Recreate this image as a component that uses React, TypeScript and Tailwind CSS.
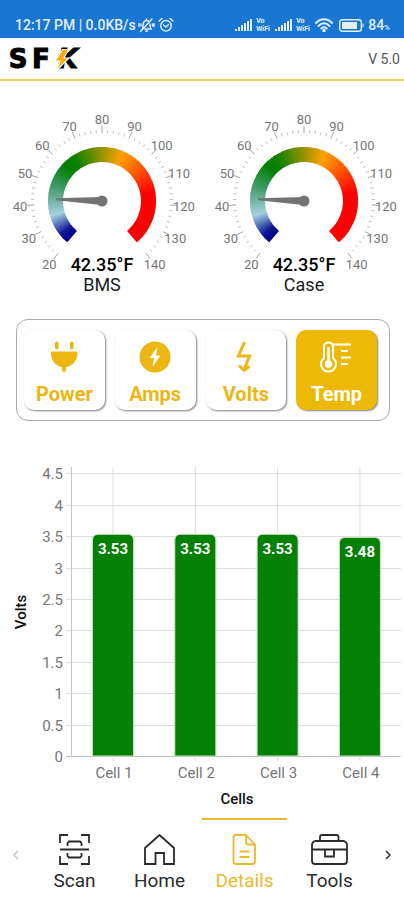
import React, { useState } from "react";

const SIGNAL_HEIGHTS = [2, 4, 6, 8, 10, 12];
const GAUGE_STOPS: [number, number[]][] = [
  [20, [0, 0, 139]],
  [24, [14, 22, 150]],
  [34, [165, 208, 222]],
  [48, [65, 155, 105]],
  [60, [0, 128, 0]],
  [66, [18, 130, 0]],
  [90, [255, 160, 0]],
  [114, [255, 0, 0]],
  [140, [255, 0, 0]],
];

const colorAt = (v: number) => {
  for (let i = 1; i < GAUGE_STOPS.length; i++) {
    const [a, ca] = GAUGE_STOPS[i - 1];
    const [b, cb] = GAUGE_STOPS[i];
    if (v <= b) {
      const t = (v - a) / (b - a);
      return `rgb(${ca.map((c, k) => Math.round(c + (cb[k] - c) * t)).join(",")})`;
    }
  }
  return "rgb(255,0,0)";
};

const CX = 102;
const CY = 101;
const angleOf = (v: number) => (((v - 80) / 60) * 140 * Math.PI) / 180;
const polar = (angle: number, r: number) => [CX + r * Math.sin(angle), CY - r * Math.cos(angle)];

function Gauge({ value, name }: { value: number; name: string }) {
  const slices = [];
  for (let v = 20; v < 140; v += 1) {
    const a = angleOf(v);
    const b = angleOf(Math.min(140, v + 1.4));
    const [x1, y1] = polar(a, 54);
    const [x2, y2] = polar(b, 54);
    const [x3, y3] = polar(b, 39);
    const [x4, y4] = polar(a, 39);
    slices.push(
      <path key={v} d={`M${x1} ${y1}A54 54 0 0 1 ${x2} ${y2}L${x3} ${y3}A39 39 0 0 0 ${x4} ${y4}Z`} fill={colorAt(v)} />,
    );
  }
  const ticks = [];
  for (let v = 20; v <= 140; v += 2) {
    const major = v % 10 === 0;
    const [x1, y1] = polar(angleOf(v), 68);
    const [x2, y2] = polar(angleOf(v), major ? 75 : 71);
    ticks.push(<line key={v} x1={x1} y1={y1} x2={x2} y2={y2} stroke={major ? "#a3a3a3" : "#c0c0c0"} strokeWidth="1" />);
  }
  const labels = [];
  for (let v = 20; v <= 140; v += 10) {
    const [x, y] = polar(angleOf(v), 82);
    labels.push(
      <text key={v} x={x} y={y + 5} textAnchor="middle" fontSize="13" fill="#767676">
        {v}
      </text>,
    );
  }
  const rotation = (angleOf(value) * 180) / Math.PI;
  return (
    <svg viewBox="0 0 202 200" className="w-full" role="img" aria-label={`${name} temperature`}>
      {slices}
      {ticks}
      {labels}
      <g transform={`rotate(${rotation} ${CX} ${CY})`}>
        <path d={`M${CX - 4} ${CY}L${CX - 1} ${CY - 46}L${CX + 1} ${CY - 46}L${CX + 4} ${CY}Z`} fill="#737373" />
      </g>
      <circle cx={CX} cy={CY} r="5.5" fill="#737373" />
      <text x={CX} y="171" textAnchor="middle" fontSize="18" fontWeight="500" fill="#000000">
        {value}°F
      </text>
      <text x={CX} y="191" textAnchor="middle" fontSize="18" fill="#1c1c1c">
        {name}
      </text>
    </svg>
  );
}

const CELLS = [
  { name: "Cell 1", volts: 3.53 },
  { name: "Cell 2", volts: 3.53 },
  { name: "Cell 3", volts: 3.53 },
  { name: "Cell 4", volts: 3.48 },
];

function CellChart() {
  const base = 302;
  const unit = 62.8;
  const yTicks = [0, 0.5, 1, 1.5, 2, 2.5, 3, 3.5, 4, 4.5];
  return (
    <svg viewBox="0 0 404 363" className="w-full" role="img" aria-label="Cell voltages">
      {yTicks.map((v) => {
        const y = Math.round(base - v * unit) + 0.5;
        return (
          <g key={v}>
            <line x1="66" x2="401" y1={y} y2={y} stroke={v === 0 ? "#bdbdbd" : "#dddddd"} />
            <text x="63" y={y + 5} textAnchor="end" fontSize="15" fill="#767676">
              {v}
            </text>
          </g>
        );
      })}
      <line x1="71.5" x2="71.5" y1="13" y2="303" stroke="#c4c4c4" />
      {CELLS.map((cell, i) => {
        const x = 113 + i * 82.3;
        const top = base - cell.volts * unit;
        return (
          <g key={cell.name}>
            <line x1={x} x2={x} y1="13" y2="307" stroke="#dddddd" />
            <path
              d={`M${x - 20.5} ${base}V${top + 6}q0 -6 6 -6h29q6 0 6 6V${base}Z`}
              fill="#048004"
              stroke="#c9dfc9"
              strokeWidth="1"
            />
            <text x={x} y={top + 20} textAnchor="middle" fontSize="15" fontWeight="700" fill="#ffffff">
              {cell.volts}
            </text>
            <text x={x + 1} y="324" textAnchor="middle" fontSize="15" fill="#767676">
              {cell.name}
            </text>
          </g>
        );
      })}
      <text x="237" y="350" textAnchor="middle" fontSize="15" fontWeight="500" fill="#111111">
        Cells
      </text>
      <text transform="translate(26 158) rotate(-90)" textAnchor="middle" fontSize="15" fontWeight="500" fill="#111111">
        Volts
      </text>
    </svg>
  );
}

function SignalBars() {
  return (
    <svg width="18" height="12" viewBox="0 0 18 12" fill="#e3effb" aria-hidden="true">
      {SIGNAL_HEIGHTS.map((h, i) => (
        <rect key={h} x={i * 3} y={12 - h} width="2" height={h} />
      ))}
    </svg>
  );
}

function VoWifi() {
  return (
    <span className="flex w-4 flex-col text-[7px] leading-[8px] font-bold">
      <span>Vo</span>
      <span>WiFi</span>
    </span>
  );
}

function StatusBar() {
  return (
    <div className="flex h-[38px] items-end justify-between bg-[#1976d2] pr-[14px] pb-[3px] pl-[15px] text-[#e3effb]">
      <div className="flex items-center">
        <span className="text-sm leading-5 font-medium">12:17 PM | 0.0KB/s</span>
        <svg className="ml-[2px]" width="17" height="16" viewBox="0 0 17 16" fill="none" stroke="currentColor" strokeWidth="1.4" strokeLinecap="round" aria-hidden="true">
          <path d="M4.5 11.5C5.5 10 5 8 5.3 6.5C5.8 4.5 7 3.5 8.5 3.5C9.5 3.5 10.5 4 11 4.7M12 7C12.2 9 12 10.5 13 12H7M7.5 14H9.5M2.5 14.5L14 2M1 6.5V9.5M3 7V9M14.5 7V9M16 6.5V9.5M8.5 2V3" />
        </svg>
        <svg className="ml-[3px]" width="16" height="16" viewBox="0 0 16 16" fill="none" stroke="currentColor" strokeWidth="1.4" strokeLinecap="round" aria-hidden="true">
          <circle cx="8" cy="8.8" r="5.3" />
          <path d="M1 4L4 1.5M15 4L12 1.5M5.5 8L8 10L10.5 7.5" />
        </svg>
      </div>
      <div className="flex items-center gap-[3px]">
        <SignalBars />
        <VoWifi />
        <SignalBars />
        <VoWifi />
        <svg width="18" height="14" viewBox="0 0 18 14" fill="none" stroke="currentColor" strokeWidth="1.9" strokeLinecap="round" aria-hidden="true">
          <path d="M1 5C5.5 0 12.5 0 17 5M3.5 8C7 4.5 11 4.5 14.5 8M6.3 10.5C8 9 10 9 11.7 10.5" />
          <circle cx="9" cy="12.5" r="0.8" />
        </svg>
        <svg className="ml-[3px]" width="26" height="13" viewBox="0 0 26 13" aria-hidden="true">
          <rect x="0.7" y="0.7" width="21.6" height="11.6" rx="2.5" fill="none" stroke="#e3effb" strokeWidth="1.4" />
          <rect x="3" y="3" width="15" height="7" fill="#e3effb" />
          <path d="M23.5 4Q26 6.5 23.5 9Z" fill="#e3effb" />
        </svg>
        <span className="flex items-baseline text-sm leading-5 font-medium">
          84<span className="text-[8px] leading-3">%</span>
        </span>
      </div>
    </div>
  );
}

function Logo() {
  return (
    <div
      className="flex items-center font-['DejaVu_Sans',sans-serif] text-[26px] leading-7 font-bold text-black [-webkit-text-stroke:1px_black]"
      aria-label="SFK"
    >
      <span className="w-6 text-center">S</span>
      <span className="w-[22px] text-center">F</span>
      <span className="relative w-[26px] text-right italic">
        K
        <svg className="absolute top-1 left-[2px]" width="17" height="22" viewBox="0 0 17 22" aria-hidden="true">
          <path d="M9 0L1 12H6L3 21L15 9H10L15 0Z" fill="#f6a80c" stroke="#ffffff" strokeWidth="1.2" />
        </svg>
      </span>
    </div>
  );
}

const METRICS = [
  {
    name: "Power",
    icon: (
      <>
        <rect x="7" y="0.5" width="3.6" height="8" rx="1.8" />
        <rect x="22" y="0.5" width="3.6" height="8" rx="1.8" />
        <path d="M3 10.5H29.5V14C28.5 21 23 25.5 18 26V29.5L16 31.5L14 29.5V26C9 25.5 4 21 3 14Z" />
      </>
    ),
  },
  {
    name: "Amps",
    icon: (
      <>
        <circle cx="16" cy="16" r="15.5" />
        <path d="M18.5 6L10.5 17H15L13.5 26L21.5 14.5H17Z" fill="#ffffff" />
      </>
    ),
  },
  {
    name: "Volts",
    icon: (
      <>
        <path d="M14.5 1L8.5 15H19.5L14.5 28" fill="none" stroke="currentColor" strokeWidth="3" />
        <path d="M9 24.5L14 29.5L19.5 25.5" fill="none" stroke="currentColor" strokeWidth="2.8" />
      </>
    ),
  },
  {
    name: "Temp",
    icon: (
      <>
        <path d="M3 17V5.5C3 0 12 0 12 5.5V17C18 22 14 30.5 7.5 30.5C1 30.5 -3 22 3 17Z" fill="none" stroke="currentColor" strokeWidth="2" />
        <path d="M7.5 6V24" stroke="currentColor" strokeWidth="2.6" />
        <circle cx="7.5" cy="23" r="3.8" />
        <path d="M11 3.5H30M20 10H27M20 16.5H30M20 23H27" stroke="currentColor" strokeWidth="2" />
      </>
    ),
  },
];

const TABS = [
  {
    name: "Scan",
    icon: <path d="M2 10V2H10M23 2H31V10M2 23V31H10M31 23V31H23M2 16.5H31M9.5 13V10L11 8.5H22L23.5 10V13M9.5 20V23L11 24.5H22L23.5 23V20" />,
  },
  {
    name: "Home",
    icon: <path d="M2 15L16.5 2L31 15V31H21V20H12.5V31H2Z" />,
  },
  {
    name: "Details",
    icon: <path d="M18 2H8Q5.5 2 5.5 4.5V28.5Q5.5 31 8 31H24.5Q27 31 27 28.5V11.5L18 2V9Q18 11.5 20.5 11.5H27M11.5 18.5H21.5M11.5 24H21.5" />,
  },
  {
    name: "Tools",
    icon: <path d="M7 8V4Q7 2 9 2H23.5Q25.5 2 25.5 4V8M2 8H31Q34 9 34 12V28Q34 31 31 31H2Q-1 31 -1 28V12Q-1 9 2 8ZM-1 16.5H34M12 16.5V23.5H21V16.5" />,
  },
];

export default function App() {
  const [metric, setMetric] = useState("Temp");
  const [tab, setTab] = useState("Details");
  return (
    <div className="flex min-h-screen flex-col bg-white font-[Roboto,'Liberation_Sans',sans-serif]">
      <StatusBar />
      <header className="flex h-[43px] items-center justify-between border-b-2 border-[#efd06c] pr-1 pl-[6px]">
        <Logo />
        <span className="text-sm text-[#555555]">V 5.0</span>
      </header>

      <main className="flex flex-1 flex-col">
        <section className="mt-[19px] grid grid-cols-2">
          <Gauge value={42.35} name="BMS" />
          <Gauge value={42.35} name="Case" />
        </section>

        <section className="mt-[19px] mr-[14px] ml-4 grid grid-cols-4 gap-[10px] rounded-xl border border-[#a9a9a9] py-[10px] pr-3 pl-[7px]">
          {METRICS.map((m) => (
            <button
              key={m.name}
              type="button"
              onClick={() => setMetric(m.name)}
              className={
                "flex h-20 flex-col items-center rounded-[10px] pt-[11px] shadow-[1px_1px_2px_0px_rgba(0,0,0,0.5)] " +
                (metric === m.name ? "bg-[#ecba06] text-white" : "bg-white text-[#ecb613]")
              }
            >
              <svg width="32" height="32" viewBox="0 0 32 32" fill="currentColor" overflow="visible" aria-hidden="true">
                {m.icon}
              </svg>
              <span className="mt-[9px] text-xl leading-6 font-bold">{m.name}</span>
            </button>
          ))}
        </section>

        <section className="mt-[33px]">
          <CellChart />
        </section>
      </main>

      <nav className="flex h-[82px] items-stretch">
        <button type="button" aria-label="Previous tabs" className="flex w-8 items-center justify-center pb-2 text-[#c4c4c4]">
          <svg width="8" height="10" viewBox="0 0 8 10" fill="none" stroke="currentColor" strokeWidth="1.5" aria-hidden="true">
            <path d="M6 1L2 5L6 9" />
          </svg>
        </button>
        <div className="grid flex-1 grid-cols-4">
          {TABS.map((t) => (
            <button
              key={t.name}
              type="button"
              onClick={() => setTab(t.name)}
              className={
                "flex flex-col items-center border-t-2 pt-[13px] " +
                (tab === t.name ? "border-[#eab92d] text-[#eab92d]" : "border-transparent text-[#2b2b2b]")
              }
            >
              <svg width="33" height="33" viewBox="0 0 33 33" fill="none" stroke="currentColor" strokeWidth="1.8" overflow="visible" aria-hidden="true">
                {t.icon}
              </svg>
              <span className="mt-[3px] text-[19px] leading-6">{t.name}</span>
            </button>
          ))}
        </div>
        <button type="button" aria-label="Next tabs" className="flex w-8 items-center justify-center pb-2 text-[#333333]">
          <svg width="8" height="10" viewBox="0 0 8 10" fill="none" stroke="currentColor" strokeWidth="1.5" aria-hidden="true">
            <path d="M2 1L6 5L2 9" />
          </svg>
        </button>
      </nav>
    </div>
  );
}
